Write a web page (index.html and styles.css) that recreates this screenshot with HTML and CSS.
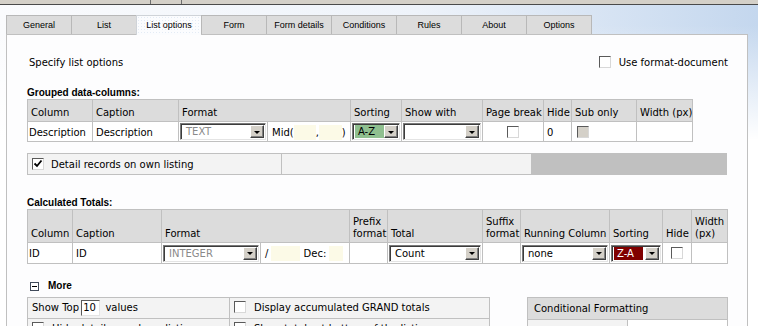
FILE: index.html
```html
<!DOCTYPE html>
<html>
<head>
<meta charset="utf-8">
<title>List options</title>
<link rel="stylesheet" href="styles.css">
</head>
<body>
<div class="topbar"><span class="tb-seg"></span><span class="tb-seg"></span></div>
<div class="tabs">
  <div class="tab">General</div>
  <div class="tab">List</div>
  <div class="tab active">List options</div>
  <div class="tab">Form</div>
  <div class="tab">Form details</div>
  <div class="tab">Conditions</div>
  <div class="tab">Rules</div>
  <div class="tab">About</div>
  <div class="tab">Options</div>
</div>
<div class="panel">
  <div class="intro">
    <span>Specify list options</span>
    <span class="cbl"><span class="cb"></span>Use format-document</span>
  </div>

  <div class="sect-title">Grouped data-columns:</div>
  <table class="grid g1">
    <colgroup>
      <col class="w65"><col class="w86"><col class="w89"><col class="w83"><col class="w51">
      <col class="w81"><col class="w61"><col class="w28"><col class="w65"><col class="w56">
    </colgroup>
    <tr class="hd">
      <th>Column</th><th>Caption</th><th colspan="2">Format</th><th>Sorting</th><th>Show with</th>
      <th>Page break</th><th>Hide</th><th>Sub only</th><th>Width (px)</th>
    </tr>
    <tr class="dt">
      <td class="first">Description</td>
      <td>Description</td>
      <td class="sc"><div class="sel dis"><span class="val">TEXT</span><span class="arr"></span></div></td>
      <td class="mid">Mid(<span class="yin w22"></span>,<span class="yin w23"></span>)</td>
      <td class="sc"><div class="sel"><span class="val green">A-Z</span><span class="arr"></span></div></td>
      <td class="sc"><div class="sel"><span class="val"></span><span class="arr"></span></div></td>
      <td class="ctr"><span class="cb"></span></td>
      <td>0</td>
      <td class="pl5"><span class="cb off"></span></td>
      <td></td>
    </tr>
  </table>

  <div class="detail">
    <div class="dcell d1"><span class="cb on"><svg viewBox="0 0 10 10" width="10" height="10"><path d="M1.5 4.5 L4 7 L8.5 1.5" fill="none" stroke="#000" stroke-width="1.8"/></svg></span>Detail records on own listing</div>
    <div class="dcell d2"></div>
    <div class="dcell d3"></div>
  </div>

  <div class="sect-title t2">Calculated Totals:</div>
  <table class="grid g2">
    <colgroup>
      <col class="w45"><col class="w89"><col class="w99"><col class="w89"><col class="w38"><col class="w95">
      <col class="w38"><col class="w89"><col class="w53"><col class="w29"><col class="w36">
    </colgroup>
    <tr class="hd">
      <th>Column</th><th>Caption</th><th colspan="2">Format</th><th>Prefix<br>format</th><th>Total</th>
      <th>Suffix<br>format</th><th>Running Column</th><th>Sorting</th><th>Hide</th><th>Width<br>(px)</th>
    </tr>
    <tr class="dt">
      <td class="first">ID</td>
      <td>ID</td>
      <td class="sc"><div class="sel dis"><span class="val">INTEGER</span><span class="arr"></span></div></td>
      <td class="mid">/<span class="yin w29"></span> Dec:<span class="yin w14"></span></td>
      <td></td>
      <td class="sc"><div class="sel"><span class="val">Count</span><span class="arr"></span></div></td>
      <td></td>
      <td class="sc"><div class="sel"><span class="val">none</span><span class="arr"></span></div></td>
      <td class="sc"><div class="sel"><span class="val red">Z-A</span><span class="arr"></span></div></td>
      <td class="pl8"><span class="cb"></span></td>
      <td></td>
    </tr>
  </table>

  <div class="more"><span class="minus"></span><b>More</b></div>

  <div class="bottom">
    <table class="grid g3">
      <colgroup><col class="w202"><col class="w260"></colgroup>
      <tr>
        <td>Show Top <span class="num">10</span> values</td>
        <td><span class="cbl"><span class="cb"></span>Display accumulated GRAND totals</span></td>
      </tr>
      <tr>
        <td><span class="cbl"><span class="cb"></span>Hide detail records on listing</span></td>
        <td><span class="cbl"><span class="cb"></span>Show totals at bottom of the listing</span></td>
      </tr>
    </table>
    <table class="grid cond">
      <colgroup><col class="w100"><col class="w100"></colgroup>
      <tr><th colspan="2">Conditional Formatting</th></tr>
      <tr><td class="lg">Column</td><td></td></tr>
    </table>
  </div>
</div>
</body>
</html>
```
FILE: styles.css
```css
* { box-sizing: border-box; }
html, body { margin: 0; padding: 0; }
body {
  font-family: "DejaVu Sans", Verdana, sans-serif;
  font-size: 10px;
  color: #000;
  height: 326px;
  overflow: hidden;
  background:
    linear-gradient(to bottom, rgba(255,255,255,0) 25px, #ffffff 140px),
    linear-gradient(to right, #fafbfd 0%, #eef3fa 55%, #c4d7ee 100%);
}

/* top window strip */
.topbar {
  height: 5px;
  background: #d4d0c8;
  border-bottom: 1px solid #4a4a4a;
  display: flex;
  padding-left: 150px;
}
.tb-seg { width: 31px; border-left: 1px solid #6e6e6e; }

/* tabs */
.tabs {
  display: flex;
  align-items: flex-start;
  margin-top: 10px;
  padding-left: 6px;
}
.tab {
  width: 65px;
  height: 19px;
  border: 1px solid #b8b8b8;
  border-right: none;
  border-bottom: none;
  background: #dcdcdc;
  font-family: "Liberation Sans", Arial, sans-serif;
  font-size: 9px;
  line-height: 18px;
  text-align: center;
  color: #000;
}
.tab:last-child { width: 66px; border-right: 1px solid #b8b8b8; }
.tab.active {
  height: 20px;
  position: relative;
  z-index: 1;
  border-color: #cfd3d8;
  background-color: #fbfcfe;
  background-image: radial-gradient(#e3ebf5 0.6px, transparent 0.7px);
  background-size: 3px 3px;
}

/* panel */
.panel {
  margin-top: -1px;
  margin-left: 6px;
  width: 742px;
  height: 300px;
  border: 1px solid #c0c0c0;
  border-bottom: none;
  background: #fdfdfe;
  padding: 20px 0 0 20px;
}
.intro {
  display: flex;
  justify-content: space-between;
  align-items: center;
  height: 14px;
  padding-left: 2px;
  padding-right: 19px;
}
.cbl { display: inline-flex; align-items: center; gap: 8px; white-space: nowrap; }
.cb {
  display: inline-block;
  width: 12px;
  height: 12px;
  background: #fff;
  border: 1px solid;
  border-color: #5a5a5a #d8d8d8 #d8d8d8 #5a5a5a;
  vertical-align: middle;
  position: relative;
}
.cb.off { background: #d4d0c8; }
.cb.on svg { display: block; margin: 0; }

.sect-title {
  margin-top: 18px;
  font-family: "Liberation Sans", Arial, sans-serif;
  font-weight: bold;
  font-size: 10px;
  line-height: 12px;
  height: 12px;
}
.sect-title.t2 { margin-top: 22px; }

/* grids */
.grid {
  border-collapse: collapse;
  table-layout: fixed;
}
.grid th, .grid td {
  border: 1px solid #c0c0c0;
  padding: 0 3px;
  text-align: left;
  font-weight: normal;
  white-space: nowrap;
  overflow: hidden;
}
.grid .hd th {
  background: #dcdcdc;
  vertical-align: bottom;
  line-height: 12px;
}
.g1 { width: 666px; }
.g1 .hd th { height: 22px; padding-bottom: 2px; }
.g1 .dt td { height: 20px; background: #fff; padding-top: 1px; }
.g2 { width: 701px; }
.g2 .hd th { height: 33px; padding-bottom: 2px; }
.g2 .dt td { height: 21px; background: #fff; }
.grid td.first { padding-left: 1px; }
.grid td.sc { padding: 0 1px; }
.grid td.mid { padding-left: 4px; }
.grid td.ctr { text-align: center; }
.grid td.pl5 { padding-left: 5px; }
.grid td.pl8 { padding-left: 8px; }

col.w14 { width: 14px; }
col.w28 { width: 28px; }
col.w29 { width: 29px; }
col.w36 { width: 36px; }
col.w38 { width: 38px; }
col.w45 { width: 45px; }
col.w51 { width: 51px; }
col.w53 { width: 53px; }
col.w56 { width: 56px; }
col.w61 { width: 61px; }
col.w65 { width: 65px; }
col.w81 { width: 81px; }
col.w83 { width: 83px; }
col.w86 { width: 86px; }
col.w89 { width: 89px; }
col.w95 { width: 95px; }
col.w99 { width: 99px; }
col.w100 { width: 100px; }
col.w202 { width: 202px; }
col.w260 { width: 260px; }

/* select imitation */
.sel {
  display: flex;
  align-items: center;
  height: 17px;
  background: #fff;
  border: 1px solid;
  border-color: #7a7a7a #e4e4e4 #e4e4e4 #7a7a7a;
  box-shadow: inset 1px 1px 0 #3c3c3c;
  padding: 1px 1px 1px 2px;
}
.sel .val {
  flex: 1;
  height: 13px;
  line-height: 13px;
  padding-left: 3px;
  overflow: hidden;
}
.sel.dis .val { color: #8a8a8a; }
.sel .val.green { background: #8fbf8f; padding-left: 3px; }
.sel .val.red { background: #800000; color: #fff; margin-right: 2px; padding-left: 3px; }
.arr {
  width: 14px;
  height: 13px;
  background: #d4d0c8;
  border: 1px solid;
  border-color: #fff #404040 #404040 #fff;
  box-shadow: inset -1px -1px 0 #808080;
  display: flex;
  align-items: center;
  justify-content: center;
  flex: none;
}
.arr::after {
  content: "";
  border-top: 3px solid #000;
  border-left: 3px solid transparent;
  border-right: 3px solid transparent;
  margin-top: 1px;
}

.yin {
  display: inline-block;
  height: 15px;
  background: #fcfae7;
  vertical-align: middle;
}
.yin.w22 { width: 22px; }
.yin.w23 { width: 23px; }
.yin.w29 { width: 29px; margin-left: 3px; }
.yin.w14 { width: 14px; margin-left: 3px; }

/* detail records row */
.detail {
  display: flex;
  margin-top: 11px;
  width: 700px;
  height: 22px;
}
.dcell { height: 22px; }
.d1 {
  width: 255px;
  border: 1px solid #c0c0c0;
  background: #f3f3f3;
  display: flex;
  align-items: center;
  gap: 7px;
  padding-left: 4px;
}
.d2 {
  width: 250px;
  border: 1px solid #c0c0c0;
  border-left: none;
  background: #f3f3f3;
}
.d3 { flex: 1; background: #c0c0c0; }

/* more */
.more {
  margin-top: 16px;
  height: 12px;
  line-height: 12px;
  display: flex;
  align-items: center;
  gap: 9px;
  padding-left: 3px;
}
.more b { font-family: "Liberation Sans", Arial, sans-serif; font-size: 10px; }
.minus {
  width: 9px;
  height: 9px;
  border: 1px solid #404a5a;
  background: #fff;
  display: flex;
  align-items: center;
  justify-content: center;
}
.minus::after { content: ""; width: 5px; height: 1px; background: #000; }

.bottom {
  margin-top: 5px;
  display: flex;
  align-items: flex-start;
  gap: 37px;
}
.g3 { width: 463px; }
.g3 td { height: 21px; background: #f3f3f3; padding-left: 4px; }
.num {
  display: inline-block;
  width: 19px;
  height: 16px;
  line-height: 14px;
  background: #fff;
  border: 1px solid;
  border-color: #5a5a5a #e4e4e4 #e4e4e4 #5a5a5a;
  padding-left: 1px;
  vertical-align: middle;
  margin: 0 2px 0 -1px;
}
.cond { width: 201px; }
.cond th { height: 22px; background: #dcdcdc; padding-left: 6px; }
.cond td { height: 21px; background: #fff; }
.cond td.lg { background: #f3f3f3; padding-left: 8px; }
```
